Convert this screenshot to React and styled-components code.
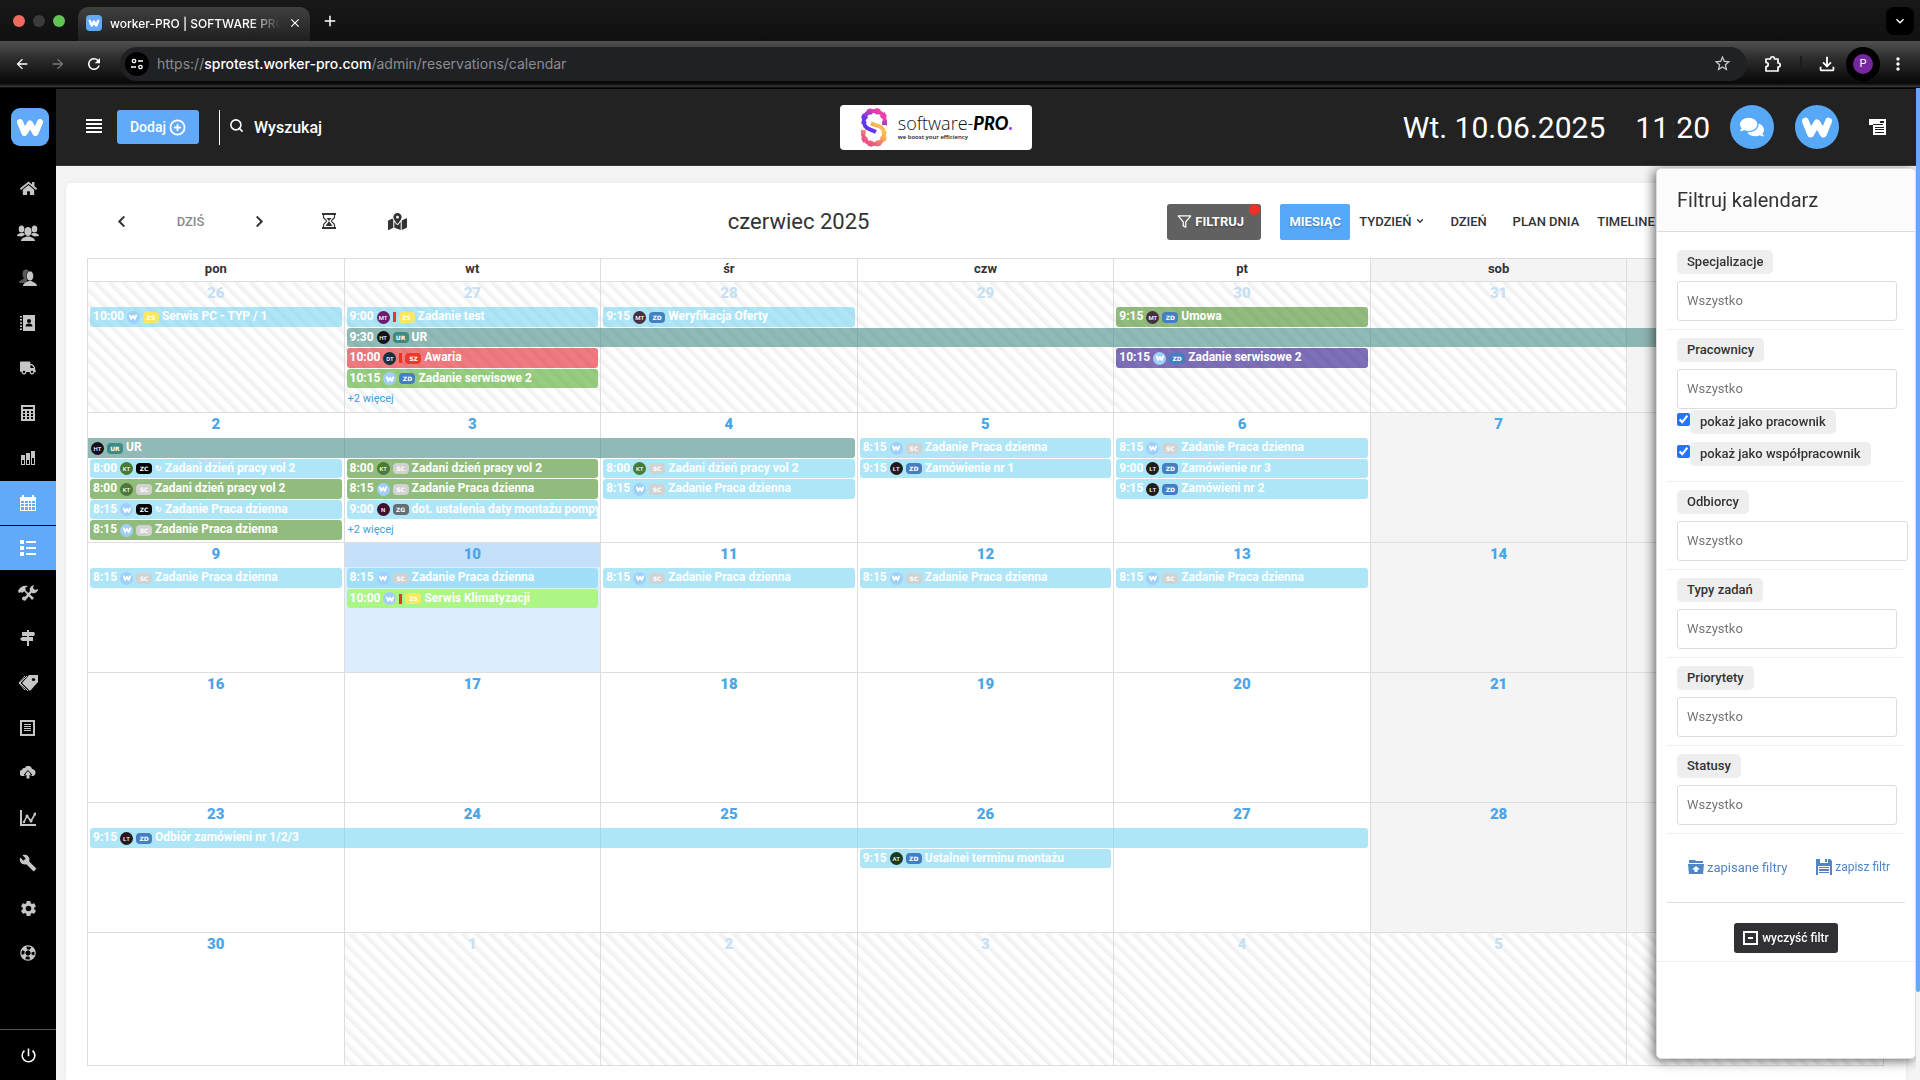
import { useState } from "react";
import styled, { createGlobalStyle, css } from "styled-components";
import { FaChevronLeft, FaChevronRight, FaComments, FaHome, FaMapMarkedAlt, FaTruck } from "react-icons/fa";
import { FiChevronDown, FiFilter, FiPlusCircle, FiSearch } from "react-icons/fi";
import { MdArrowBack, MdArrowForward, MdBuild, MdClose, MdKeyboardArrowDown, MdMoreVert, MdOutlineFileDownload, MdPowerSettingsNew, MdRefresh, MdSettings, MdStarBorder, MdAdd } from "react-icons/md";

const GlobalStyle = createGlobalStyle`
    * {
        box-sizing: border-box;
    }

    body {
        margin: 0;
        background: #f4f4f4;
        color: #333;
        font-family: Roboto, "Liberation Sans", sans-serif;
        font-size: 13px;
    }

    button, input {
        font-family: inherit;
    }

    button {
        border: none;
        padding: 0;
        background: none;
        color: inherit;
        cursor: pointer;
    }

    a {
        text-decoration: none;
    }
`

/* ---------- browser ---------- */

const Browser = styled.div`
    display: flex;
    flex-direction: column;
    min-height: 100vh;
`

const TabStrip = styled.div`
    display: flex;
    align-items: center;
    height: 41px;
    padding: 0 6px 0 13px;
    background: linear-gradient(#181818, #101010);
    color: #fff;
`

const Lights = styled.div`
    display: flex;
    gap: 8px;
    margin-right: 13px;
`

const Light = styled.span`
    width: 12px;
    height: 12px;
    border-radius: 50%;
    background: ${({ $color }) => $color};
`

const Tab = styled.div`
    display: flex;
    align-items: center;
    align-self: flex-end;
    width: 232px;
    height: 34px;
    padding: 0 8px 2px;
    border-radius: 10px 10px 0 0;
    background: linear-gradient(#414141, #1e1e1e);
`

const TabTitle = styled.span`
    flex: 1;
    margin: 0 8px;
    overflow: hidden;
    white-space: nowrap;
    font: 500 12px Inter, sans-serif;
    mask-image: linear-gradient(90deg, #000 82%, transparent);
`

const ChromeButton = styled.button`
    display: flex;
    align-items: center;
    justify-content: center;
    flex: none;
    width: ${({ $w }) => $w || 28}px;
    height: 28px;
    border-radius: 8px;
    background: ${({ $dark }) => ($dark ? '#000' : 'transparent')};
    color: ${({ $dim }) => ($dim ? '#777' : '#fff')};
    font-size: 18px;
`

const Toolbar = styled.div`
    display: flex;
    align-items: center;
    height: 48px;
    padding: 0 8px 2px;
    border-bottom: 1px solid #000;
    background: linear-gradient(#505050, #2a2a2a 40%, #080808 90%, #333 97%, #000);
    color: #fff;
`

const Spacer = styled.span`
    flex: 1;
`

const Address = styled.div`
    display: flex;
    align-items: center;
    flex: 1;
    height: 34px;
    margin: 0 12px;
    padding: 0 15px 0 5px;
    border-radius: 17px;
    background: #202124;
    color: #8c8c8e;
    font: 14px Inter, sans-serif;

    b {
        color: #fff;
        font-weight: 500;
    }
`

const SiteInfo = styled.button`
    display: flex;
    align-items: center;
    justify-content: center;
    width: 24px;
    height: 24px;
    margin-right: 8px;
    border-radius: 50%;
    background: #000;
`

const Separator = styled.span`
    width: 2px;
    height: 16px;
    margin: 0 11px 0 13px;
    background: #1c1c1c;
`

const Profile = styled.button`
    width: 34px;
    height: 34px;
    margin: 0 4px 0 5px;
    border: 7px solid #000;
    border-radius: 50%;
    background: #7627a0;
    color: #fff;
    font-size: 11px;
`

/* ---------- application frame ---------- */

const Frame = styled.div`
    display: flex;
    flex: 1;
`

const Sidebar = styled.nav`
    display: flex;
    flex-direction: column;
    width: 56px;
    background: #000;
`

const SidebarLogo = styled.a`
    display: flex;
    justify-content: center;
    height: 77px;
    padding: 19px 0 0 4px;
`

const SidebarItem = styled.a`
    display: flex;
    align-items: center;
    justify-content: center;
    height: 44px;
    margin-bottom: 1px;
    background: ${({ $active }) => ($active ? '#62a9f9' : 'transparent')};
    color: ${({ $active }) => ($active ? '#fff' : '#c6c6c6')};
`

const PowerItem = styled(SidebarItem)`
    height: 51px;
    margin: auto 0 0;
    border-top: 1px solid #555;
    color: #fff;
    font-size: 19px;
`

const Main = styled.main`
    display: flex;
    flex-direction: column;
    flex: 1;
    min-width: 0;
`

const Header = styled.header`
    display: grid;
    grid-template-columns: 15fr auto 17fr;
    align-items: center;
    height: 77px;
    border-bottom: 1px solid #3c3638;
    background: #222;
    color: #fff;
`

const HeaderLeft = styled.div`
    display: flex;
    align-items: center;
    padding-left: 30px;
`

const HeaderRight = styled.div`
    display: flex;
    align-items: center;
    justify-content: flex-end;
    padding-right: 34px;
`

const AddButton = styled.button`
    display: flex;
    align-items: center;
    justify-content: center;
    gap: 3px;
    width: 82px;
    height: 34px;
    margin: 0 20px 0 15px;
    border-radius: 3px;
    background: #62a9f9;
    color: #fff;
    font-size: 14px;
    font-weight: 500;
`

const Search = styled.label`
    display: flex;
    align-items: center;
    gap: 8px;
    height: 35px;
    padding-left: 9px;
    border-left: 1px solid #fff;
    font-size: 15px;

    svg {
        margin-bottom: 4px;
    }

    input {
        width: 200px;
        border: none;
        outline: none;
        background: transparent;
        color: #fff;
        font-size: 16px;
        font-weight: 500;
    }

    input::placeholder {
        color: #fff;
        opacity: 1;
    }
`

const Brand = styled.div`
    display: flex;
    align-items: center;
    gap: 11px;
    width: 192px;
    height: 45px;
    padding-left: 21px;
    border-radius: 4px;
    background: #fff;
    color: #111;
`

const BrandName = styled.div`
    font: 300 18px/20px "Open Sans", sans-serif;
    white-space: nowrap;

    b {
        font: italic 900 18px/20px Lato, sans-serif;
        color: #000;
    }

    i {
        color: #a33be8;
        font: 900 18px/20px Lato, sans-serif;
    }
`

const BrandClaim = styled.div`
    font: 600 6px/8px "Open Sans", sans-serif;
`

const Clock = styled.div`
    display: flex;
    gap: 30px;
    margin-right: 20px;
    font-size: 30px;
    white-space: nowrap;

    i {
        color: #2d2d2d;
        font-style: normal;
    }
`

const RoundButton = styled.button`
    display: flex;
    align-items: center;
    justify-content: center;
    width: 44px;
    height: 44px;
    margin-right: 21px;
    border-radius: 50%;
    background: #57a9f8;
    color: #fff;
    font-size: 24px;
`

const NotesButton = styled.button`
    display: flex;
    margin-left: 9px;
`

const Card = styled.section`
    flex: 1;
    margin: 17px 14px 0 10px;
    padding: 21px 22px 10px 21px;
    border-radius: 5px 5px 0 0;
    background: #fff;
    box-shadow: 0 0 4px rgba(0, 0, 0, 0.06);
`

const CalendarBar = styled.div`
    display: flex;
    align-items: center;
    height: 36px;
    margin-bottom: 18px;
`

const NavButton = styled.button`
    display: flex;
    align-items: center;
    justify-content: center;
    width: 69px;
    height: 36px;
    padding-bottom: 2px;
    color: ${({ $muted }) => ($muted ? '#888' : '#333')};
    font-size: 13px;
    font-weight: 500;
`

const Title = styled.h2`
    flex: 1;
    margin: 0;
    padding-bottom: 2px;
    text-align: center;
    font-size: 22px;
    font-weight: 400;
`

const Views = styled.div`
    display: flex;
    width: 40%;
    padding-left: 2px;
`

const ViewButton = styled.button`
    display: flex;
    align-items: center;
    justify-content: center;
    gap: 3px;
    min-width: 70px;
    height: 36px;
    padding: 0 9px 2px;
    font-size: 13px;
    font-weight: 500;
    white-space: nowrap;

    ${({ $active }) => $active && css`
        background: #57a9f8;
        color: #fff;
        font-weight: 700;
        border-radius: 2px;
        text-shadow: 0 1px 2px rgba(0, 0, 0, 0.3);
    `}
`

const FilterButton = styled(ViewButton)`
    position: relative;
    width: 94px;
    margin-right: 19px;
    padding-right: 16px;
    border-radius: 3px;
    background: #616161;
    color: #fff;
    font-weight: 700;
    text-shadow: 0 1px 2px rgba(0, 0, 0, 0.4);

    &::after {
        content: "";
        position: absolute;
        top: 0;
        right: 1px;
        width: 11px;
        height: 11px;
        border-radius: 50%;
        background: #ee3124;
    }
`

/* ---------- month ---------- */

const Month = styled.table`
    width: 100%;
    table-layout: fixed;
    border-collapse: collapse;

    tbody tr {
        height: 130px;
    }

    tbody tr:first-child {
        height: 131px;
    }

    tbody tr:last-child {
        height: 133px;
    }
`

const DayName = styled.th`
    height: 23px;
    padding: 0 0 3px;
    border: 1px solid #ddd;
    background: ${({ $weekend }) => ($weekend ? '#f4f4f4' : '#fff')};
    font-size: 13px;
    font-weight: 700;
`

const Day = styled.td`
    padding: 0;
    border: 1px solid #ddd;
    vertical-align: top;
    background: ${({ $weekend }) => ($weekend ? '#f4f4f4' : '#fff')};

    ${({ $other }) => $other && css`
        background: repeating-linear-gradient(45deg, #fff, #fff 5px, #ededed 5px, #fbfbfb 10px);
    `}

    ${({ $today }) => $today && css`
        background: #ddedfd;
    `}
`

const DayNumber = styled.div`
    height: 24px;
    margin-bottom: 1px;
    background: ${({ $today }) => ($today ? '#c5e0fb' : 'transparent')};
    color: ${({ $other }) => ($other ? '#c8e0f4' : '#4aa6e8')};
    text-align: center;
    font-size: 15px;
    font-weight: 900;
    line-height: 23px;
`

const Events = styled.div`
    display: grid;
    grid-template-columns: 100%;
    grid-template-rows: 20px 19px 20px 19px 20px;
    row-gap: 1px;
`

const kinds = {
    sky: 'rgba(120, 213, 243, 0.6)',
    teal: 'rgba(72, 140, 133, 0.6)',
    green: 'rgba(73, 143, 38, 0.6)',
    grass: 'rgba(80, 172, 43, 0.6)',
    lime: 'rgba(138, 252, 52, 0.6)',
    red: 'rgba(228, 35, 43, 0.6)',
    violet: 'rgba(38, 17, 137, 0.6)',
}

const Event = styled.a`
    position: relative;
    z-index: 1;
    display: flex;
    align-items: center;
    gap: 3px;
    grid-row: ${({ $row }) => $row};
    width: calc(${({ $span }) => $span} * 100% + ${({ $span, $from }) => $span - 1 - ($from ? 2 : 4)}px);
    margin-left: ${({ $from }) => ($from ? 0 : 2)}px;
    padding: 0 0 0 3px;
    border-radius: ${({ $from }) => ($from ? '0 3px 3px 0' : '3px')};
    background: ${({ $kind }) => kinds[$kind]};
    color: #fff;
    font-size: 12px;
    font-weight: 700;
    white-space: nowrap;
    overflow: hidden;
`

const EventText = styled.span`
    padding-bottom: 2px;
`

const Repeat = styled.span`
    font-size: 8px;
`

const Avatar = styled.span`
    display: flex;
    align-items: center;
    justify-content: center;
    flex: none;
    width: 13px;
    height: 13px;
    border-radius: 50%;
    background: ${({ $color }) => $color};
    font-size: 6px;
    font-weight: 500;
`

const Badge = styled.span`
    flex: none;
    width: 16px;
    height: 11px;
    border-radius: 4px;
    background: ${({ $color }) => $color};
    text-align: center;
    font: 700 6px/11px "DejaVu Sans", sans-serif;
`

const Alert = styled.span`
    flex: none;
    width: 3px;
    height: 10px;
    background: #ea3323;
`

const More = styled.a`
    grid-row: 5;
    padding-left: 3px;
    color: #3f9fe3;
    font-size: 11px;
    line-height: 19px;
`

/* ---------- filter panel ---------- */

const Panel = styled.aside`
    position: fixed;
    z-index: 5;
    top: 168px;
    right: 4px;
    bottom: 21px;
    width: 260px;
    border: 1px solid #ddd;
    border-radius: 5px;
    background: #fff;
    box-shadow: -2px 2px 12px rgba(0, 0, 0, 0.6);
    clip-path: inset(-10px 0 -20px -20px);
`

const PanelTitle = styled.h3`
    margin: 0 0 10px;
    padding-left: 20px;
    border-bottom: 1px solid #ddd;
    border-radius: 5px 5px 0 0;
    background: #fcfcfc;
    font-size: 20px;
    font-weight: 400;
    line-height: 62px;
`

const Group = styled.div`
    margin: 0 10px;
    padding: 8px 10px;
    border-bottom: 1px solid #eee;
`

const Caption = styled.label`
    display: inline-block;
    height: 24px;
    padding: 0 10px;
    border-radius: 5px;
    background: #eee;
    font-size: 13px;
    font-weight: 500;
    line-height: 23px;
    vertical-align: top;
`

const Field = styled.input`
    display: block;
    width: ${({ $wide }) => ($wide ? 231 : 220)}px;
    height: 40px;
    margin-top: 7px;
    padding: 0 9px 2px;
    border: 1px solid #ddd;
    border-radius: 3px;
    background: #fff;
    font-size: 13px;

    &::placeholder {
        color: #777;
        opacity: 1;
    }
`

const Checks = styled.div`
    display: grid;
    gap: 8px;
    padding: 1px 0 7px;
`

const Check = styled.div`
    display: flex;

    input {
        width: 13px;
        height: 13px;
        margin: 3px 0 0;
        accent-color: #2374ff;
    }
`

const PanelLinks = styled.div`
    display: flex;
    align-items: center;
    justify-content: space-between;
    height: 69px;
    margin: 0 10px;
    padding: 0 15px 2px 21px;
    border-bottom: 1px solid #ddd;
`

const PanelLink = styled.a`
    display: flex;
    align-items: center;
    gap: 3px;
    color: #4f86c6;
    font-size: ${({ $small }) => ($small ? 12 : 13)}px;
`

const PanelFooter = styled.div`
    display: flex;
    justify-content: center;
    padding: 20px 0 8px;
    border-bottom: 1px solid #eee;
`

const ClearButton = styled.button`
    display: flex;
    align-items: center;
    justify-content: center;
    gap: 4px;
    width: 104px;
    height: 30px;
    border-radius: 3px;
    background: #303035;
    color: #fff;
    font-size: 12px;
    font-weight: 500;
`

const ScrollThumb = styled.span`
    position: fixed;
    z-index: 6;
    top: 88px;
    right: 0;
    bottom: 88px;
    width: 4px;
    border-radius: 0 0 2px 2px;
    background: #62a9f9;
`

/* ---------- drawings ---------- */

const LogoMark = ({ size, rounded }) => (
    <svg width={size} height={size} viewBox="0 0 38 38">
        {rounded && <rect width="38" height="38" rx="9" fill="#62a9f9" />}
        <path d="M9 14 13.500 25 19 15.500 24.500 25 29 14" fill="none" stroke="#fff" strokeWidth="6" strokeLinecap="round" strokeLinejoin="round" />
    </svg>
)

const BrandMark = () => (
    <svg width="26" height="39" viewBox="0 0 26 39" fill="none">
        <defs>
            <linearGradient id="markTop" x1="0" y1="1" x2="1" y2="0">
                <stop offset="0.2" stopColor="#5b35f5" />
                <stop offset="0.8" stopColor="#ee3fa4" />
            </linearGradient>
            <linearGradient id="markBottom" x1="0" y1="1" x2="1" y2="0">
                <stop offset="0.2" stopColor="#ee5386" />
                <stop offset="0.8" stopColor="#f7c04e" />
            </linearGradient>
        </defs>
        <g stroke="url(#markBottom)">
            <path d="M2 22C1 31 6 36 13 36S24 31 23 24C22 18 17 18 10 15.500" strokeWidth="4" />
            <path d="M2 22C1 31 6 36 13 36S24 31 23 24" strokeWidth="6" strokeDasharray="4 3.500" />
        </g>
        <g stroke="url(#markTop)">
            <path d="M24 17C25 8 20 3 13 3S2 8 3 15C4 21 9 21 15 24" strokeWidth="4" />
            <path d="M24 17C25 8 20 3 13 3S2 8 3 15" strokeWidth="6" strokeDasharray="4 3.500" />
        </g>
    </svg>
)

const Glyph = ({ w = 18, h = 18, children }) => (
    <svg width={w} height={h} viewBox={`0 0 ${w} ${h}`} fill="currentColor">{children}</svg>
)

const UsersIcon = () => (
    <Glyph w={22}>
        <ellipse cx="4.500" cy="5" rx="2.800" ry="3.600" />
        <ellipse cx="17.500" cy="5" rx="2.800" ry="3.600" />
        <path d="M0 12c0-2 2-2.500 3.500-3h3L8 10.500 5 12.500zM22 12c0-2-2-2.500-3.500-3h-3L14 10.500l3 2z" />
        <ellipse cx="11" cy="7.500" rx="3.600" ry="4.600" />
        <path d="M4 17c0-3 3.500-3.500 5.500-4.500h3C14.500 13.500 18 14 18 17z" />
    </Glyph>
)

const PeopleIcon = () => (
    <Glyph>
        <g opacity="0.45">
            <ellipse cx="7" cy="5" rx="3.500" ry="4.500" />
            <path d="M0 14c0-3 4-3 5-5h3v5z" />
        </g>
        <ellipse cx="11" cy="7" rx="3.600" ry="5" stroke="#000" strokeWidth="0.600" />
        <path d="M4 17c0-3 3.500-3.500 5.500-5h3c2 1.500 5.500 2 5.500 5z" />
    </Glyph>
)

const ContactsIcon = () => (
    <Glyph w={16}>
        <path d="M3 1h12v16H3zM0 2h2v1.500H0zM0 5h2v1.500H0zM0 8.300h2v1.500H0zM0 11.500h2V13H0zM0 14.500h2V16H0z" />
        <circle cx="9" cy="7" r="2" fill="#000" />
        <path d="M5.500 12.500c0-2 1.500-3 3.500-3s3.500 1 3.500 3z" fill="#000" />
    </Glyph>
)

const CalculatorIcon = () => (
    <Glyph w={14} h={16}>
        <path d="M0 0h14v16H0z" />
        <path d="M2 2h10v2H2zM2 6h2v2H2zM6 6h2v2H6zM10 6h2v2h-2zM2 9h2v2H2zM6 9h2v2H6zM10 9h2v2h-2zM2 12h2v2H2zM6 12h2v2H6zM10 12h2v2h-2z" fill="#000" />
    </Glyph>
)

const BarsIcon = () => (
    <Glyph w={14} h={14}>
        <path d="M0 4h4v10H0zM5 2h4v12H5zM10 0h4v14h-4z" />
        <path d="M1 9h2v4H1zM6 9h2v4H6zM11 7h2v6h-2z" fill="#000" />
    </Glyph>
)

const CalendarIcon = () => (
    <Glyph w={16} h={16}>
        <path d="M2 0h2v2h8V0h2v2h2v14H0V2h2z" />
        <path d="M1 6h3v2H1zM5 6h3v2H5zM9 6h2v2H9zM12 6h3v2h-3zM1 9h3v2H1zM5 9h3v2H5zM9 9h2v2H9zM12 9h3v2h-3zM1 12h3v3H1zM5 12h3v3H5zM9 12h2v3H9zM12 12h3v3h-3z" fill="#62a9f9" />
    </Glyph>
)

const ListIcon = () => (
    <Glyph w={16} h={16}>
        <path d="M0 0h4v4H0zM0 6h4v4H0zM0 12h4v4H0zM6 1h10v2H6zM6 7h10v2H6zM6 13h10v2H6z" />
    </Glyph>
)

const ToolsIcon = () => (
    <Glyph w={20} h={16}>
        <path d="M0 6C2 2 5 0 10 1L7 3l1 2-4 3-1-1-2 1z" />
        <path d="M7 5l9 8-2 2-8-9zM5 14l8-9 2 1-8 10z" />
        <circle cx="6" cy="13.500" r="2" />
        <path d="M12 6c-1-3 1-5 4-6l-1 3 2 2 3-1c0 3-3 5-6 4z" />
    </Glyph>
)

const SignIcon = () => (
    <Glyph w={16} h={16}>
        <path d="M7 0h2v2h5l1 2-1 2H9v1h4v4H9v5H7v-5H2L0 9l2-2h5V6H2V2h5z" />
    </Glyph>
)

const TagsIcon = () => (
    <Glyph w={20} h={16}>
        <path d="M11 0h9v7l-8 9-8-8z" />
        <path d="M9 1 2 8l8 8M7 1 1 8l6 7" fill="none" stroke="currentColor" />
        <circle cx="15.500" cy="4.500" r="1.600" fill="#000" />
    </Glyph>
)

const ArticleIcon = () => (
    <Glyph w={16} h={16}>
        <path d="M1 1h13v14H1z" fill="none" stroke="currentColor" strokeWidth="2" />
        <path d="M4 4h7v1H4zM4 6h7v1H4zM4 8h7v1H4zM4 10h7v1H4z" />
    </Glyph>
)

const CloudIcon = () => (
    <Glyph w={16} h={14}>
        <path d="M3 10a3 3 0 0 1-1-6c0-2 2-2 3-2 1-3 6-3 7 1 4 0 5 6 1 7z" />
        <path d="M8 4.500 12 9h-2v4H6V9H4z" stroke="#000" />
    </Glyph>
)

const ChartIcon = () => (
    <Glyph w={16} h={16}>
        <path d="M0 0h2v14h14v2H0z" />
        <path d="m4 12 3-6 4 5 4-7" fill="none" stroke="currentColor" strokeWidth="1.600" />
        <circle cx="15" cy="4" r="1.500" /><circle cx="7" cy="6" r="1.500" /><circle cx="11" cy="11" r="1.500" /><circle cx="4" cy="12" r="1.300" />
    </Glyph>
)

const LifeBuoyIcon = () => (
    <Glyph w={16} h={16}>
        <circle cx="8" cy="8" r="7.200" fill="none" stroke="currentColor" strokeWidth="1.200" />
        <circle cx="8" cy="8" r="5" fill="none" stroke="currentColor" strokeWidth="4.500" strokeDasharray="4 3.854" strokeDashoffset="-1.950" />
        <circle cx="8" cy="8" r="3.200" fill="none" stroke="currentColor" />
    </Glyph>
)

const HourglassIcon = () => (
    <Glyph w={14} h={16}>
        <path d="M0 1h14M0 15h14" stroke="currentColor" strokeWidth="2" />
        <path d="M1.500 1v3c0 2 3 2.500 3 4s-3 2-3 4v3m11-14v3c0 2-3 2.500-3 4s3 2 3 4v3" fill="none" stroke="currentColor" strokeWidth="1.200" />
        <path d="M4.500 5h5L7 8zM7 8l3.500 5h-7z" />
    </Glyph>
)

const NotesIcon = () => (
    <Glyph w={17} h={16}>
        <path d="M0 0h17v16H4V6H0z" />
        <path d="M4 5h10v1H4zM6 8h9v1H6zM6 10h9v1H6zM6 13h9v1H6zM11 2h4v2h-4z" fill="#222" />
    </Glyph>
)

const FolderIcon = () => (
    <Glyph w={16} h={14}>
        <path d="M1 0h6l1 1h7v2H1zM0 4h16l-1 10H1z" />
        <path d="M8 6 12 9.500H9.500V12h-3V9.500H4z" fill="#fff" />
    </Glyph>
)

const DiskIcon = () => (
    <Glyph w={16} h={16}>
        <path d="M0 0h14l2 2v14H0z" />
        <path d="M4 0h8v4H4zM2 7h12v9H2z" fill="#fff" />
        <path d="M9 0h2v3H9zM3 8h10v1H3zM3 10h10v2H3zM3 13h10v1H3z" />
    </Glyph>
)

const MinusSquareIcon = () => (
    <Glyph w={15} h={14}>
        <path d="M1 1h13v12H1z" fill="none" stroke="currentColor" strokeWidth="2" />
        <path d="M5 6h5v2H5z" />
    </Glyph>
)

const MenuIcon = () => (
    <Glyph w={16} h={14}>
        <path d="M0 0h16v2H0zM0 4h16v2H0zM0 8h16v2H0zM0 12h16v2H0z" />
    </Glyph>
)

const TuneIcon = () => (
    <Glyph w={12} h={12}>
        <path d="M7 3h5M0 9h5" stroke="#fff" strokeWidth="1.500" />
        <circle cx="3" cy="3" r="1.700" fill="none" stroke="#fff" strokeWidth="1.300" />
        <circle cx="9.500" cy="9" r="1.700" fill="none" stroke="#fff" strokeWidth="1.300" />
    </Glyph>
)

const PuzzleIcon = () => (
    <Glyph w={18} h={18}>
        <path d="M2 4h4.500c0-3 4-3 4 0H14v4c3 0 3 4 0 4v4H2v-4.500c3 0 3-4 0-4z" fill="none" stroke="currentColor" strokeWidth="1.700" strokeLinejoin="round" />
    </Glyph>
)

/* ---------- data ---------- */

const menu = [
    { name: 'Pulpit', icon: <FaHome size={17} /> },
    { name: 'Pracownicy', icon: <UsersIcon /> },
    { name: 'Odbiorcy', icon: <PeopleIcon /> },
    { name: 'Kontakty', icon: <ContactsIcon /> },
    { name: 'Pojazdy', icon: <FaTruck size={16} /> },
    { name: 'Kalkulacje', icon: <CalculatorIcon /> },
    { name: 'Magazyn', icon: <BarsIcon /> },
    { name: 'Kalendarz', icon: <CalendarIcon />, active: true },
    { name: 'Zadania', icon: <ListIcon />, active: true },
    { name: 'Serwis', icon: <ToolsIcon /> },
    { name: 'Trasy', icon: <SignIcon /> },
    { name: 'Produkty', icon: <TagsIcon /> },
    { name: 'Dokumenty', icon: <ArticleIcon /> },
    { name: 'Pliki', icon: <CloudIcon /> },
    { name: 'Raporty', icon: <ChartIcon /> },
    { name: 'Narzędzia', icon: <MdBuild size={18} /> },
    { name: 'Ustawienia', icon: <MdSettings size={19} /> },
    { name: 'Pomoc', icon: <LifeBuoyIcon /> },
]

const people = {
    HT: '#140e18',
    KT: '#497a38',
    MT: '#6c1b6e',
    MK: '#47303f',
    DT: '#15323c',
    N: '#40102f',
    'ŁT': '#231a1e',
    AT: '#1b3a1e',
}

const tags = {
    ZS: '#fde75c',
    UR: '#3d8b83',
    SZ: '#ea3a2c',
    ZD: '#447fc4',
    ZC: '#000',
    SC: '#d2d2d2',
    ZG: '#636e72',
}

const daily = (row, kind = 'sky') => ({ row, kind, time: '8:15', who: 'W', tag: 'SC', text: 'Zadanie Praca dzienna' })

const events = {
    '26.05': [{ row: 1, kind: 'sky', time: '10:00', who: 'W', tag: 'ZS', text: 'Serwis PC - TYP / 1' }],
    '27.05': [
        { row: 1, kind: 'sky', time: '9:00', who: 'MT', alert: true, tag: 'ZS', text: 'Zadanie test' },
        { row: 2, kind: 'teal', time: '9:30', who: 'HT', tag: 'UR', text: 'UR', span: 6 },
        { row: 3, kind: 'red', time: '10:00', who: 'DT', alert: true, tag: 'SZ', text: 'Awaria' },
        { row: 4, kind: 'grass', time: '10:15', who: 'W', tag: 'ZD', text: 'Zadanie serwisowe 2' },
    ],
    '28.05': [{ row: 1, kind: 'sky', time: '9:15', who: 'MT', color: people.MK, tag: 'ZD', text: 'Weryfikacja Oferty' }],
    '30.05': [
        { row: 1, kind: 'green', time: '9:15', who: 'MT', color: people.MK, tag: 'ZD', text: 'Umowa' },
        { row: 3, kind: 'violet', time: '10:15', who: 'W', tag: 'ZD', text: 'Zadanie serwisowe 2' },
    ],
    '2.06': [
        { row: 1, kind: 'teal', who: 'HT', tag: 'UR', text: 'UR', span: 3, continued: true },
        { row: 2, kind: 'sky', time: '8:00', who: 'KT', tag: 'ZC', repeat: true, text: 'Zadani dzień pracy vol 2' },
        { row: 3, kind: 'green', time: '8:00', who: 'KT', tag: 'SC', text: 'Zadani dzień pracy vol 2' },
        { row: 4, kind: 'sky', time: '8:15', who: 'W', tag: 'ZC', repeat: true, text: 'Zadanie Praca dzienna' },
        daily(5, 'green'),
    ],
    '3.06': [
        { row: 2, kind: 'green', time: '8:00', who: 'KT', tag: 'SC', text: 'Zadani dzień pracy vol 2' },
        daily(3, 'green'),
        { row: 4, kind: 'sky', time: '9:00', who: 'N', tag: 'ZG', text: 'dot. ustalenia daty montażu pompy' },
    ],
    '4.06': [
        { row: 2, kind: 'sky', time: '8:00', who: 'KT', tag: 'SC', text: 'Zadani dzień pracy vol 2' },
        daily(3),
    ],
    '5.06': [
        daily(1),
        { row: 2, kind: 'sky', time: '9:15', who: 'ŁT', tag: 'ZD', text: 'Zamówienie nr 1' },
    ],
    '6.06': [
        daily(1),
        { row: 2, kind: 'sky', time: '9:00', who: 'ŁT', tag: 'ZD', text: 'Zamówienie nr 3' },
        { row: 3, kind: 'sky', time: '9:15', who: 'ŁT', tag: 'ZD', text: 'Zamówieni nr 2' },
    ],
    '9.06': [daily(1)],
    '10.06': [
        daily(1),
        { row: 2, kind: 'lime', time: '10:00', who: 'W', alert: true, tag: 'ZS', text: 'Serwis Klimatyzacji' },
    ],
    '11.06': [daily(1)],
    '12.06': [daily(1)],
    '13.06': [daily(1)],
    '23.06': [{ row: 1, kind: 'sky', time: '9:15', who: 'ŁT', tag: 'ZD', text: 'Odbiór zamówieni nr 1/2/3', span: 5 }],
    '26.06': [{ row: 2, kind: 'sky', time: '9:15', who: 'AT', tag: 'ZD', text: 'Ustalnei terminu montażu' }],
}

const more = { '27.05': 2, '3.06': 2 }

const dayNames = ['pon', 'wt', 'śr', 'czw', 'pt', 'sob', 'ndz']

const firstDay = new Date(2025, 4, 26)

const weeks = [0, 1, 2, 3, 4, 5].map(week => dayNames.map((_, day) => {
    const date = new Date(firstDay)
    date.setDate(date.getDate() + week * 7 + day)
    return {
        number: date.getDate(),
        key: `${date.getDate()}.0${date.getMonth() + 1}`,
        other: date.getMonth() !== 5,
        weekend: day > 4,
        sunday: day === 6,
    }
}))

const views = ['MIESIĄC', 'TYDZIEŃ', 'DZIEŃ', 'PLAN DNIA', 'TIMELINE']

/* ---------- components ---------- */

const BrowserChrome = () => (
    <>
        <TabStrip>
            <Lights>
                <Light $color="#ee6a5f" />
                <Light $color="#3c3c3c" />
                <Light $color="#61c554" />
            </Lights>
            <Tab>
                <LogoMark size={16} rounded />
                <TabTitle>worker-PRO | SOFTWARE PRO</TabTitle>
                <MdClose size={14} />
            </Tab>
            <ChromeButton $w={40} aria-label="Nowa karta"><MdAdd /></ChromeButton>
            <Spacer />
            <ChromeButton $dark aria-label="Karty"><MdKeyboardArrowDown size={16} /></ChromeButton>
        </TabStrip>
        <Toolbar>
            <ChromeButton aria-label="Wstecz"><MdArrowBack size={16} /></ChromeButton>
            <ChromeButton $w={44} $dim aria-label="Dalej"><MdArrowForward size={16} /></ChromeButton>
            <ChromeButton aria-label="Odśwież"><MdRefresh size={18} /></ChromeButton>
            <Address>
                <SiteInfo aria-label="Informacje o witrynie"><TuneIcon /></SiteInfo>
                <span>https://<b>sprotest.worker-pro.com</b>/admin/reservations/calendar</span>
                <Spacer />
                <MdStarBorder size={19} color="#c8c8c8" />
            </Address>
            <ChromeButton aria-label="Rozszerzenia"><PuzzleIcon /></ChromeButton>
            <Separator />
            <ChromeButton aria-label="Pobrane"><MdOutlineFileDownload size={22} /></ChromeButton>
            <Profile>P</Profile>
            <ChromeButton aria-label="Menu"><MdMoreVert size={20} /></ChromeButton>
        </Toolbar>
    </>
)

const CalendarEvent = ({ event }) => (
    <Event href="#" $row={event.row} $kind={event.kind} $span={event.span || 1} $from={event.continued}>
        {event.time && <EventText>{event.time}</EventText>}
        {event.who === 'W'
            ? <Avatar $color="#9fd0fb"><LogoMark size={12} /></Avatar>
            : <Avatar $color={event.color || people[event.who]}>{event.who}</Avatar>}
        {event.alert && <Alert />}
        <Badge $color={tags[event.tag]}>{event.tag}</Badge>
        {event.repeat && <Repeat>↻</Repeat>}
        <EventText>{event.text}</EventText>
    </Event>
)

const MonthTable = ({ covered }) => (
    <Month>
        <thead>
            <tr>
                {dayNames.map((name, i) => (
                    <DayName key={name} $weekend={i > 4}>{covered && i === 6 ? '' : name}</DayName>
                ))}
            </tr>
        </thead>
        <tbody>
            {weeks.map(week => (
                <tr key={week[0].key}>
                    {week.map(day => {
                        const today = day.key === '10.06'
                        return (
                            <Day key={day.key} $weekend={day.weekend} $other={day.other} $today={today}>
                                <DayNumber $other={day.other} $today={today}>
                                    {covered && day.sunday ? '' : day.number}
                                </DayNumber>
                                <Events>
                                    {(events[day.key] || []).map(event => <CalendarEvent key={event.row} event={event} />)}
                                    {more[day.key] && <More href="#">+{more[day.key]} więcej</More>}
                                </Events>
                            </Day>
                        )
                    })}
                </tr>
            ))}
        </tbody>
    </Month>
)

const FilterGroup = ({ id, name, wide, children }) => (
    <Group>
        <Caption htmlFor={id}>{name}</Caption>
        <Field id={id} placeholder="Wszystko" $wide={wide} />
        {children}
    </Group>
)

const FilterPanel = () => {
    const [asWorker, setAsWorker] = useState(true)
    const [asCoworker, setAsCoworker] = useState(true)

    return (
        <Panel>
            <PanelTitle>Filtruj kalendarz</PanelTitle>
            <FilterGroup id="specializations" name="Specjalizacje" />
            <FilterGroup id="workers" name="Pracownicy">
                <Checks>
                    <Check>
                        <input id="as-worker" type="checkbox" checked={asWorker} onChange={e => setAsWorker(e.target.checked)} />
                        <Caption htmlFor="as-worker">pokaż jako pracownik</Caption>
                    </Check>
                    <Check>
                        <input id="as-coworker" type="checkbox" checked={asCoworker} onChange={e => setAsCoworker(e.target.checked)} />
                        <Caption htmlFor="as-coworker">pokaż jako współpracownik</Caption>
                    </Check>
                </Checks>
            </FilterGroup>
            <FilterGroup id="clients" name="Odbiorcy" wide />
            <FilterGroup id="types" name="Typy zadań" />
            <FilterGroup id="priorities" name="Priorytety" />
            <FilterGroup id="statuses" name="Statusy" />
            <PanelLinks>
                <PanelLink href="#"><FolderIcon />zapisane filtry</PanelLink>
                <PanelLink href="#" $small><DiskIcon />zapisz filtr</PanelLink>
            </PanelLinks>
            <PanelFooter>
                <ClearButton><MinusSquareIcon />wyczyść filtr</ClearButton>
            </PanelFooter>
        </Panel>
    )
}

const App = () => {
    const [view, setView] = useState('MIESIĄC')
    const [filterOpen, setFilterOpen] = useState(true)

    return (
        <Browser>
            <GlobalStyle />
            <BrowserChrome />
            <Frame>
                <Sidebar>
                    <SidebarLogo href="#" aria-label="worker-PRO"><LogoMark size={38} rounded /></SidebarLogo>
                    {menu.map(item => (
                        <SidebarItem key={item.name} href="#" aria-label={item.name} $active={item.active}>{item.icon}</SidebarItem>
                    ))}
                    <PowerItem href="#" aria-label="Wyloguj"><MdPowerSettingsNew /></PowerItem>
                </Sidebar>
                <Main>
                    <Header>
                        <HeaderLeft>
                            <button aria-label="Menu"><MenuIcon /></button>
                            <AddButton>Dodaj <FiPlusCircle size={17} strokeWidth={2.5} /></AddButton>
                            <Search>
                                <FiSearch strokeWidth={2.5} />
                                <input type="text" placeholder="Wyszukaj" />
                            </Search>
                        </HeaderLeft>
                        <Brand>
                            <BrandMark />
                            <div>
                                <BrandName>software-<b>PRO</b><i>.</i></BrandName>
                                <BrandClaim>we boost your efficiency</BrandClaim>
                            </div>
                        </Brand>
                        <HeaderRight>
                            <Clock><span>Wt. 10.06.2025</span><span>11<i>:</i>20</span></Clock>
                            <RoundButton aria-label="Wiadomości"><FaComments /></RoundButton>
                            <RoundButton aria-label="Konto"><LogoMark size={44} /></RoundButton>
                            <NotesButton aria-label="Notatki"><NotesIcon /></NotesButton>
                        </HeaderRight>
                    </Header>
                    <Card>
                        <CalendarBar>
                            <NavButton aria-label="Poprzedni"><FaChevronLeft /></NavButton>
                            <NavButton $muted>DZIŚ</NavButton>
                            <NavButton aria-label="Następny"><FaChevronRight /></NavButton>
                            <NavButton aria-label="Godziny"><HourglassIcon /></NavButton>
                            <NavButton aria-label="Mapa"><FaMapMarkedAlt size={19} /></NavButton>
                            <Title>czerwiec 2025</Title>
                            <Views>
                                <FilterButton onClick={() => setFilterOpen(!filterOpen)}>
                                    <FiFilter size={15} />FILTRUJ
                                </FilterButton>
                                {views.map(name => (
                                    <ViewButton key={name} $active={name === view} onClick={() => setView(name)}>
                                        {name}
                                        {name === 'TYDZIEŃ' && <FiChevronDown size={10} strokeWidth={3} />}
                                    </ViewButton>
                                ))}
                            </Views>
                        </CalendarBar>
                        <MonthTable covered={filterOpen} />
                    </Card>
                </Main>
            </Frame>
            {filterOpen && <FilterPanel />}
            <ScrollThumb />
        </Browser>
    )
}

export default App;
